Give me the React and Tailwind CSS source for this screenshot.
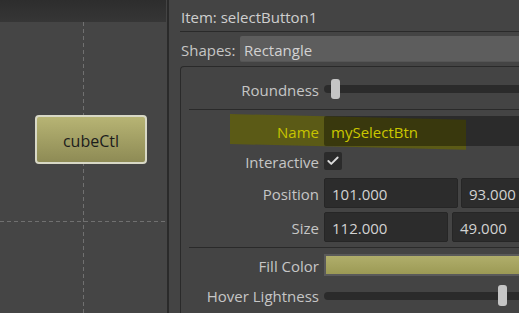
import React from "react";
import { Check } from "lucide-react";

function Label({ children, className = "" }) {
  return (
    <div className={"w-[137px] shrink-0 text-right pt-[2px] " + className}>{children}</div>
  );
}

function Field({ children, className = "" }) {
  return (
    <div className={"h-[30px] flex items-center pl-[7px] pt-[2px] bg-[#2c2c2c] border border-[#262626] rounded-[2px] text-[#d2d2d2] " + className}>
      {children}
    </div>
  );
}

export default function App() {
  return (
    <div
      className="w-[519px] h-[313px] overflow-hidden flex bg-[#444444] text-[15px] leading-none"
      style={{ fontFamily: '"Open Sans", "Noto Sans", sans-serif' }}
    >
      {/* Left canvas panel */}
      <div className="w-[167px] shrink-0 flex flex-col">
        <div className="h-[22px] mr-[1px] bg-gradient-to-b from-[#2d2d2d] to-[#363636]" />
        <div className="relative flex-1 bg-[#454545]">
          <div className="absolute left-[83px] top-0 bottom-0 w-[1px] bg-[repeating-linear-gradient(to_bottom,#707070_0_4px,transparent_4px_7px)]" />
          <div className="absolute left-0 right-0 top-[199px] h-[1px] bg-[repeating-linear-gradient(to_right,#707070_0_4px,transparent_4px_7px)]" />
          <div className="absolute left-[35px] top-[93px] w-[112px] h-[49px] rounded-[4px] border-2 border-[#d8d8c6] bg-gradient-to-b from-[#b7b474] to-[#8e8b55] flex items-center justify-center pt-[2px] text-[#1c1c1c] text-[16px]">
            cubeCtl
          </div>
        </div>
      </div>
      <div className="w-[2px] shrink-0 bg-[#2a2a2a]" />

      {/* Right attribute panel */}
      <div className="w-[380px] shrink-0 flex flex-col pl-[11px] text-[#c6c6c6]">
        <div className="h-[31px] flex items-center pl-[1px] pt-[4px] text-[#cfcfcf]">
          Item:&nbsp;selectButton1
        </div>
        <div className="h-[1px] bg-[#2a2a2a]" />
        <div className="mt-[4px] h-[26px] flex items-center pl-[1px]">
          <span className="w-[59px] shrink-0 pt-[3px]">Shapes:</span>
          <div className="flex-1 h-full bg-[#5d5d5d] rounded-[2px] flex items-center pl-[4px] pt-[3px] text-[#d2d2d2] border-b border-[#555555]">
            Rectangle
          </div>
        </div>

        {/* Group box */}
        <div className="mt-[4px] flex-1 border-l border-t border-[#2a2a2a] rounded-tl-[4px] flex flex-col pl-[1px]">
          {/* Roundness */}
          <div className="mt-[11px] h-[22px] flex items-center gap-[5px]">
            <Label>Roundness</Label>
            <div className="relative flex-1 h-[8px] bg-[#2b2b2b] rounded-full">
              <div className="absolute left-[7px] top-[-6px] w-[9px] h-[20px] bg-[#c5c5c5] rounded-[3px]" />
            </div>
          </div>
          <div className="mt-[9px] ml-[7px] h-[1px] bg-[#2a2a2a]" />

          {/* Name (highlighted) */}
          <div className="relative mt-[6px] h-[30px] flex items-center gap-[5px]">
            <div className="absolute left-[48px] top-[-2px] w-[236px] h-[30px] bg-[#5b5a16] skew-y-[1.4deg] origin-top-left" />
            <Label className="relative text-[#c8c400]">Name</Label>
            <div className="relative flex-1 h-[30px] flex items-center pl-[7px] pt-[2px] bg-black/[0.37] rounded-[2px] text-[#cbc700]">
              mySelectBtn
            </div>
          </div>

          {/* Interactive */}
          <div className="mt-[6px] h-[18px] flex items-center gap-[5px]">
            <Label>Interactive</Label>
            <div className="w-[18px] h-[18px] bg-[#2b2b2b] rounded-[2px] flex items-center justify-center">
              <Check size={14} strokeWidth={3.2} color="#dcdcdc" />
            </div>
          </div>

          {/* Position */}
          <div className="mt-[8px] h-[30px] flex items-center gap-[5px]">
            <Label>Position</Label>
            <Field className="w-[134px] shrink-0">101.000</Field>
            <Field className="flex-1 ml-[-2px]">93.000</Field>
          </div>

          {/* Size */}
          <div className="mt-[4px] h-[30px] flex items-center gap-[5px]">
            <Label>Size</Label>
            <Field className="w-[124px] shrink-0">112.000</Field>
            <Field className="flex-1 ml-[-1px]">49.000</Field>
          </div>
          <div className="mt-[5px] ml-[7px] h-[1px] bg-[#2a2a2a]" />

          {/* Fill Color */}
          <div className="mt-[6px] h-[22px] flex items-center gap-[5px]">
            <Label>Fill Color</Label>
            <div className="flex-1 h-[22px] border-2 border-[#5a5a5a] bg-gradient-to-b from-[#b0ae6b] to-[#9c9a55]" />
          </div>

          {/* Hover Lightness */}
          <div className="mt-[9px] h-[21px] flex items-center gap-[5px]">
            <Label>Hover Lightness</Label>
            <div className="relative flex-1 h-[8px] bg-[#2b2b2b] rounded-full">
              <div className="absolute left-[174px] top-[-7px] w-[9px] h-[21px] bg-[#c5c5c5] rounded-[3px]" />
            </div>
          </div>
        </div>
      </div>
    </div>
  );
}
